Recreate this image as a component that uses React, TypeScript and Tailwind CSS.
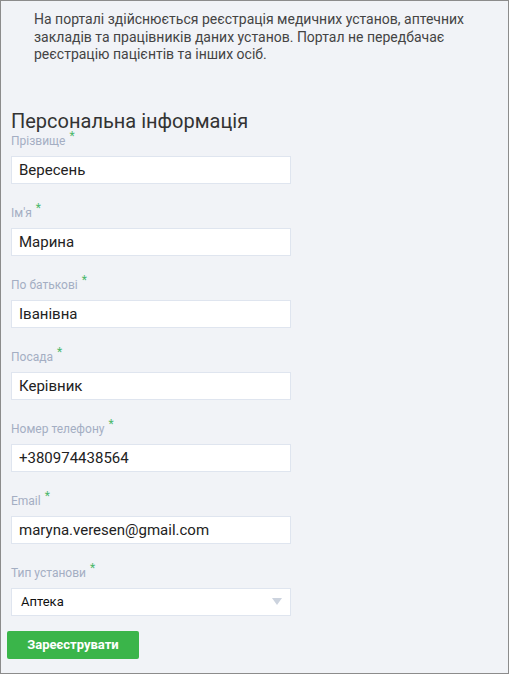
import React from 'react';

interface FieldProps {
  label: string;
  value: string;
}

const fields: FieldProps[] = [
  { label: 'Прізвище', value: 'Вересень' },
  { label: "Ім'я", value: 'Марина' },
  { label: 'По батькові', value: 'Іванівна' },
  { label: 'Посада', value: 'Керівник' },
  { label: 'Номер телефону', value: '+380974438564' },
  { label: 'Email', value: 'maryna.veresen@gmail.com' },
];

const Label: React.FC<{ text: string }> = ({ text }) => (
  <div className="h-[14px] text-[12px] leading-[14px] text-[#a4aec3]">
    {text}
    <span className="relative top-[-3px] ml-[4px] inline-block align-top text-[12px] leading-[10px] text-[#4cb86a]">*</span>
  </div>
);

const Field: React.FC<FieldProps> = ({ label, value }) => (
  <div className="mb-[22px]">
    <Label text={label} />
    <input
      readOnly
      value={value}
      className="mt-[8px] block h-[28px] w-[280px] border border-[#dfe5ef] bg-white px-[7px] text-[15px] text-[#222] outline-none"
    />
  </div>
);

const App: React.FC = () => {
  return (
    <div
      className="h-[674px] w-[509px] overflow-hidden border border-[#8c8c8c] bg-[#f1f3f7]"
      style={{ fontFamily: 'Roboto, "Noto Sans", sans-serif' }}
    >
      <p className="pl-[33px] pr-[20px] pt-[10px] text-[14px] leading-[17.5px] text-[#444]">
        На порталі здійснюється реєстрація медичних установ, аптечних закладів та працівників даних установ. Портал не передбачає
        реєстрацію пацієнтів та інших осіб.
      </p>

      <div className="px-[10px] pt-[46px]">
        <h2 className="mb-[2px] h-[22px] text-[20px] leading-[22px] text-[#333]">Персональна інформація</h2>

        {fields.map((f) => (
          <Field key={f.label} label={f.label} value={f.value} />
        ))}

        <div>
          <Label text="Тип установи" />
          <div className="mt-[8px] flex h-[28px] w-[280px] items-center justify-between border border-[#dfe5ef] bg-white pl-[9px] pr-[8px]">
            <span className="text-[13px] text-[#111]">Аптека</span>
            <svg width="10" height="7" viewBox="0 0 10 7">
              <path d="M0 0 L10 0 L5 7 Z" fill="#ccd3de" />
            </svg>
          </div>
        </div>

        <button className="ml-[-4px] mt-[15px] h-[28px] w-[132px] rounded-[2px] bg-[#3ab54a] text-[13px] font-bold text-white">
          Зареєструвати
        </button>
      </div>
    </div>
  );
};

export default App;
